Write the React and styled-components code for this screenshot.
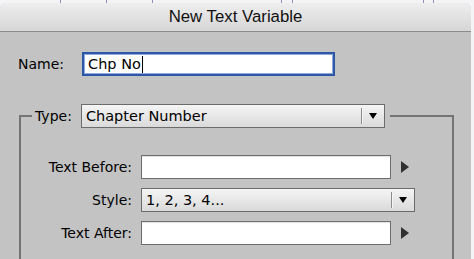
import styled, { createGlobalStyle } from "styled-components";

const GlobalStyle = createGlobalStyle`
  html, body {
    margin: 0;
    padding: 0;
    overflow: hidden;
  }
  body {
    width: 474px;
    height: 259px;
  }
`;

// document guides peeking behind the dialog
const guideLines = [60, 106, 152, 281, 292, 423, 433]
  .map((x) => `linear-gradient(to right, transparent ${x}px, #8f90c4 ${x}px, #8f90c4 ${x + 1}px, transparent ${x + 1}px)`)
  .join(", ");

const Page = styled.div`
  width: 474px;
  height: 259px;
  background-color: #f4f4f6;
  background-image: ${guideLines};
  overflow: hidden;
`;

const Dialog = styled.div`
  margin-top: 3px;
  width: 471px;
  height: 256px;
  border-radius: 6px 6px 0 0;
  background: #c3c3c3;
  overflow: hidden;
  font-family: "DejaVu Sans", "Lucida Grande", sans-serif;
  font-size: 14px;
  color: #000;
`;

const TitleBar = styled.div`
  height: 28px;
  display: flex;
  align-items: center;
  justify-content: center;
  background: linear-gradient(#eeeeee, #d6d6d6);
  border-bottom: 1px solid #8a8a8a;
  font-family: "Liberation Sans", Arial, sans-serif;
  font-size: 16.8px;
  color: #111;
`;

const Body = styled.div`
  padding-top: 20px;
`;

const NameRow = styled.div`
  display: flex;
  align-items: center;
  gap: 18px;
  padding-left: 18px;
`;

const Label = styled.span`
  white-space: nowrap;
  width: ${(p) => (p.$width ? `${p.$width}px` : "auto")};
  text-align: ${(p) => (p.$width ? "right" : "left")};
`;

const TextField = styled.div`
  box-sizing: border-box;
  width: ${(p) => p.$width}px;
  height: 24px;
  display: flex;
  align-items: center;
  padding-left: ${(p) => (p.$focused ? 4 : 5)}px;
  background: #fff;
  border: ${(p) => (p.$focused ? "2px solid #2d58a8" : "1px solid #6e6e6e")};
  box-shadow: ${(p) => (p.$focused ? "inset 0 0 0 1px #8eaadc" : "inset 0 1px 1px rgba(0,0,0,0.12)")};
  font-size: 14.5px;
`;

const Caret = styled.span`
  display: inline-block;
  width: 1px;
  height: 17px;
  margin-left: 1px;
  background: #000;
`;

const Group = styled.fieldset`
  box-sizing: border-box;
  margin: 28px 0 0 19px;
  padding: 27px 0 0 0;
  width: 435px;
  height: 220px;
  border: 2px solid #747474;
  border-bottom: none;
`;

const Legend = styled.legend`
  display: flex;
  align-items: center;
  gap: 9px;
  margin-left: 11px;
  padding: 0 5px 0 3px;
`;

const Select = styled.div`
  box-sizing: border-box;
  width: ${(p) => p.$width}px;
  height: 24px;
  display: flex;
  align-items: center;
  background: linear-gradient(#f5f5f5, #dadada);
  border: 1px solid #6c6c6c;
  font-size: 14.5px;
`;

const SelectValue = styled.span`
  flex: 1;
  padding-left: 4px;
  white-space: nowrap;
`;

const SelectArrow = styled.span`
  width: 22px;
  height: 16px;
  display: flex;
  align-items: center;
  justify-content: center;
  border-left: 1px solid #8c8c8c;
  box-shadow: inset 1px 0 0 #f4f4f4;

  &::after {
    content: "";
    border-left: 4.5px solid transparent;
    border-right: 4.5px solid transparent;
    border-top: 6px solid #000;
  }
`;

const Rows = styled.div`
  display: flex;
  flex-direction: column;
  gap: 9px;
`;

const Row = styled.div`
  display: flex;
  align-items: center;
  gap: 9px;
`;

const Flyout = styled.span`
  margin-left: 1px;
  width: 0;
  height: 0;
  border-top: 6px solid transparent;
  border-bottom: 6px solid transparent;
  border-left: 8px solid #303030;
`;

export default function App() {
  return (
    <>
      <GlobalStyle />
      <Page>
        <Dialog>
          <TitleBar>New Text Variable</TitleBar>
          <Body>
            <NameRow>
              <Label>Name:</Label>
              <TextField $width={253} $focused>
                Chp No<Caret />
              </TextField>
            </NameRow>
            <Group>
              <Legend>
                <Label>Type:</Label>
                <Select $width={304}>
                  <SelectValue>Chapter Number</SelectValue>
                  <SelectArrow />
                </Select>
              </Legend>
              <Rows>
                <Row>
                  <Label $width={111}>Text Before:</Label>
                  <TextField $width={250} />
                  <Flyout />
                </Row>
                <Row>
                  <Label $width={111}>Style:</Label>
                  <Select $width={274}>
                    <SelectValue>1, 2, 3, 4...</SelectValue>
                    <SelectArrow />
                  </Select>
                </Row>
                <Row>
                  <Label $width={111}>Text After:</Label>
                  <TextField $width={250} />
                  <Flyout />
                </Row>
              </Rows>
            </Group>
          </Body>
        </Dialog>
      </Page>
    </>
  );
}
